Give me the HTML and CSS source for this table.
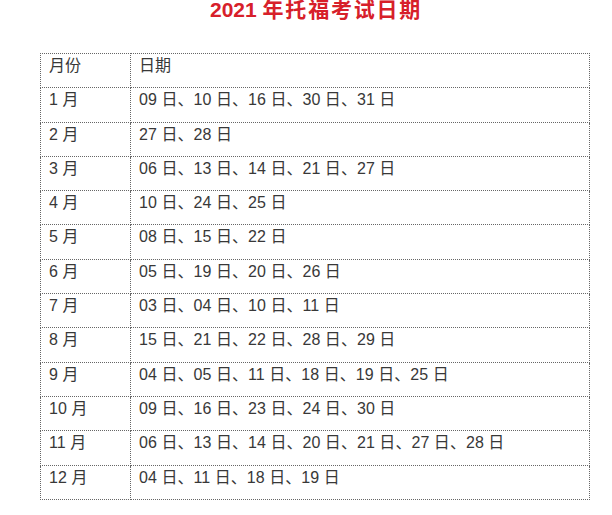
FILE: index.html
```
<!DOCTYPE html>
<html lang="zh-CN">
<head>
<meta charset="utf-8">
<title>2021 年托福考试日期</title>
<link rel="stylesheet" href="styles.css">
</head>
<body>
<h1 class="title">2021 <span class="cjk">年托福考试日期</span></h1>
<table class="dates">
  <tr><td class="month">月份</td><td>日期</td></tr>
  <tr><td class="month">1 月</td><td>09 日、10 日、16 日、30 日、31 日</td></tr>
  <tr><td class="month">2 月</td><td>27 日、28 日</td></tr>
  <tr><td class="month">3 月</td><td>06 日、13 日、14 日、21 日、27 日</td></tr>
  <tr><td class="month">4 月</td><td>10 日、24 日、25 日</td></tr>
  <tr><td class="month">5 月</td><td>08 日、15 日、22 日</td></tr>
  <tr><td class="month">6 月</td><td>05 日、19 日、20 日、26 日</td></tr>
  <tr><td class="month">7 月</td><td>03 日、04 日、10 日、11 日</td></tr>
  <tr><td class="month">8 月</td><td>15 日、21 日、22 日、28 日、29 日</td></tr>
  <tr><td class="month">9 月</td><td>04 日、05 日、11 日、18 日、19 日、25 日</td></tr>
  <tr><td class="month">10 月</td><td>09 日、16 日、23 日、24 日、30 日</td></tr>
  <tr><td class="month">11 月</td><td>06 日、13 日、14 日、20 日、21 日、27 日、28 日</td></tr>
  <tr><td class="month">12 月</td><td>04 日、11 日、18 日、19 日</td></tr>
</table>
</body>
</html>
```
FILE: styles.css
```
html, body {
  margin: 0;
  padding: 0;
  background: #ffffff;
}
body {
  font-family: "Liberation Sans", "Noto Sans CJK SC", sans-serif;
  color: #383838;
}
.title {
  margin: 0;
  padding: 0 0 0 210px;
  font-size: 21px;
  line-height: 19px;
  font-weight: bold;
  color: #d7202a;
}
.title .cjk {
  letter-spacing: 1.8px;
}
.dates {
  margin: 34px 0 0 40px;
  width: 550px;
  border-collapse: collapse;
  font-size: 16px;
  letter-spacing: 0.05px;
}
.dates td {
  border: 1px dotted #666666;
  height: 34.3px;
  padding: 1px 8px 0 8px;
  vertical-align: top;
  line-height: 22px;
  box-sizing: border-box;
}
.dates td.month {
  width: 90px;
}
```
